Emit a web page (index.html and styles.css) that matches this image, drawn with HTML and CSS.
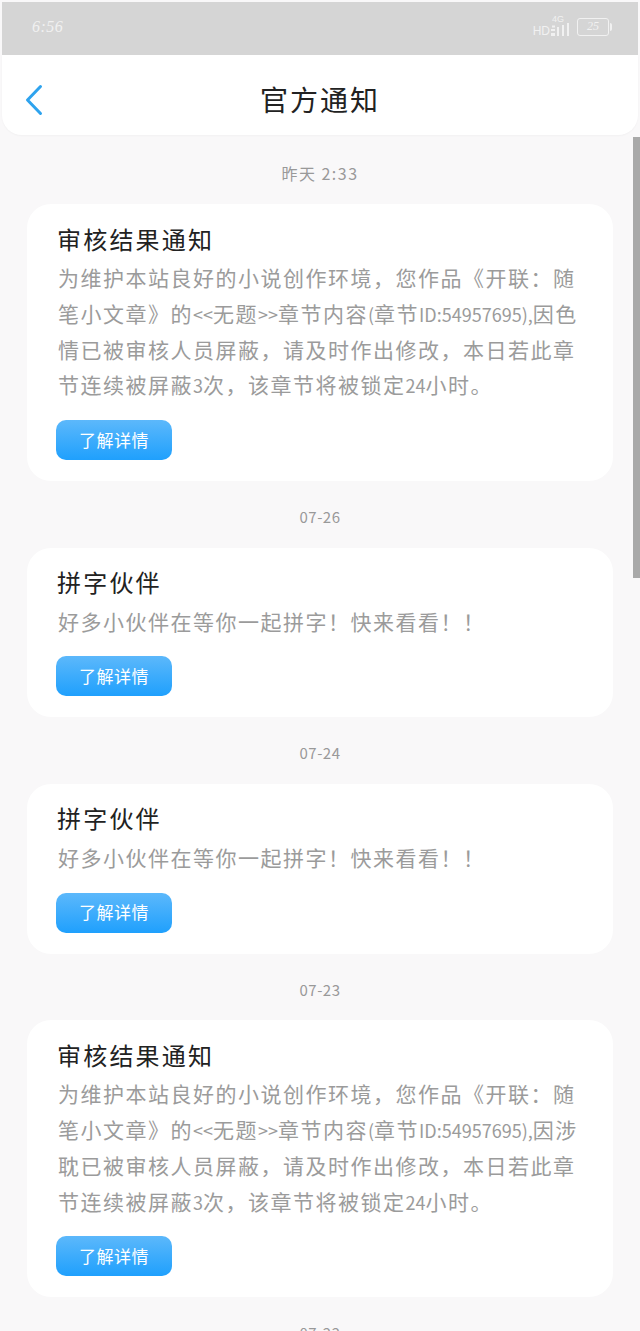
FILE: index.html
```html
<!DOCTYPE html>
<html lang="zh-CN">
<head>
    <meta charset="UTF-8">
    <meta name="viewport" content="width=device-width, initial-scale=1.0">
    <title>官方通知</title>
    <link rel="stylesheet" href="styles.css">
</head>
<body>
    <div class="status-bar">
        <span class="status-time">6:56</span>
        <div class="status-right">
            <span class="status-hd">HD</span>
            <div class="signal">
                <span class="signal-4g">4G</span>
                <svg width="18" height="13" viewBox="0 0 18 13" fill="#f1f1f1">
                    <rect x="0" y="10" width="4" height="3"/>
                    <rect x="0" y="6" width="4" height="2"/>
                    <rect x="1" y="2.500" width="3" height="2"/>
                    <rect x="6" y="4" width="2" height="9"/>
                    <rect x="11" y="2" width="2" height="11"/>
                    <rect x="16" y="0" width="2" height="13"/>
                </svg>
            </div>
            <div class="battery">
                <span class="battery-body">25</span>
                <span class="battery-cap"></span>
            </div>
        </div>
    </div>

    <header class="top-bar">
        <svg class="back-icon" width="20" height="32" viewBox="0 0 20 32" fill="none">
            <path d="M16.5 2.5 L3.5 16 L16.5 29.500" stroke="#2ea3ee" stroke-width="3" stroke-linecap="round" stroke-linejoin="round"/>
        </svg>
        <h1>官方通知</h1>
    </header>

    <main class="list">
        <p class="date date-first">昨天 2:33</p>
        <section class="card">
            <h2>审核结果通知</h2>
            <p>为维护本站良好的小说创作环境，您作品《开联：随<br>笔小文章》的<span class="latin">&lt;&lt;</span>无题<span class="latin">&gt;&gt;</span>章节内容<span class="latin">(</span>章节<span class="latin">ID:54957695),</span>因色<br>情已被审核人员屏蔽，请及时作出修改，本日若此章<br>节连续被屏蔽<span class="latin">3</span>次，该章节将被锁定<span class="latin">24</span>小时。</p>
            <button type="button">了解详情</button>
        </section>

        <p class="date">07-26</p>
        <section class="card">
            <h2>拼字伙伴</h2>
            <p>好多小伙伴在等你一起拼字！快来看看！！</p>
            <button type="button">了解详情</button>
        </section>

        <p class="date">07-24</p>
        <section class="card">
            <h2>拼字伙伴</h2>
            <p>好多小伙伴在等你一起拼字！快来看看！！</p>
            <button type="button">了解详情</button>
        </section>

        <p class="date">07-23</p>
        <section class="card">
            <h2>审核结果通知</h2>
            <p>为维护本站良好的小说创作环境，您作品《开联：随<br>笔小文章》的<span class="latin">&lt;&lt;</span>无题<span class="latin">&gt;&gt;</span>章节内容<span class="latin">(</span>章节<span class="latin">ID:54957695),</span>因涉<br>耽已被审核人员屏蔽，请及时作出修改，本日若此章<br>节连续被屏蔽<span class="latin">3</span>次，该章节将被锁定<span class="latin">24</span>小时。</p>
            <button type="button">了解详情</button>
        </section>

        <p class="date">07-22</p>
    </main>

    <div class="scroll-thumb"></div>
</body>
</html>
```

FILE: styles.css
```css
html, body {
    height: 1331px;
    overflow: hidden;
}
body {
    position: relative;
    margin: 0;
    padding-top: 2px;
    box-sizing: border-box;
    background-color: #f9f8f9;
    font-family: "Noto Sans CJK SC", "Noto Sans", sans-serif;
}

/* status bar */
.status-bar {
    display: flex;
    align-items: center;
    justify-content: space-between;
    height: 53px;
    margin: 0 2px;
    padding: 0 26px 0 30px;
    box-sizing: border-box;
    background-color: #d5d5d5;
    color: #f1f1f1;
}
.status-time {
    font-family: "Liberation Serif", serif;
    font-style: italic;
    font-size: 16px;
    letter-spacing: 0.5px;
    margin-bottom: 3px;
}
.status-right {
    display: flex;
    align-items: flex-end;
    align-self: flex-end;
    margin-bottom: 19px;
}
.status-hd {
    font-family: "Liberation Sans", sans-serif;
    font-size: 12px;
    line-height: 10px;
    margin-right: 1px;
}
.signal {
    display: flex;
    flex-direction: column;
    align-items: center;
    width: 18px;
    margin-right: 8px;
}
.signal-4g {
    font-family: "Liberation Sans", sans-serif;
    font-size: 9px;
    line-height: 7px;
    margin-right: 4px;
}
.signal svg {
    display: block;
}
.battery {
    display: flex;
    align-items: center;
}
.battery-body {
    width: 32px;
    height: 18px;
    box-sizing: border-box;
    border: 1px solid #f1f1f1;
    border-radius: 3px;
    font-family: "Liberation Serif", serif;
    font-style: italic;
    font-size: 12px;
    line-height: 15px;
    text-align: center;
}
.battery-cap {
    width: 2px;
    height: 8px;
    margin-left: 1px;
    background-color: #f1f1f1;
    border-radius: 0 2px 2px 0;
}

/* header */
.top-bar {
    position: relative;
    display: flex;
    align-items: center;
    justify-content: center;
    height: 80px;
    margin: 0 2px;
    background: white;
    border-radius: 0 0 20px 20px;
    box-shadow: 0 1px 2px rgba(0, 0, 0, 0.03);
}
.top-bar h1 {
    margin: 0;
    padding-top: 8px;
    font-size: 28px;
    font-weight: 400;
    letter-spacing: 2px;
    color: #222;
}
.back-icon {
    position: absolute;
    left: 22px;
    top: 29px;
}

/* notice list */
.list {
    padding: 3px 27px 0;
}
.date {
    height: 66.5px;
    margin: 0;
    padding-top: 25px;
    box-sizing: border-box;
    font-size: 15px;
    line-height: 22px;
    letter-spacing: 0.5px;
    text-align: center;
    color: #999;
}
.date-first {
    height: 66px;
    padding-top: 24px;
    font-size: 16px;
    letter-spacing: 1.5px;
}
.card {
    padding: 18.5px 29px 21px;
    background: white;
    border-radius: 24px;
}
.card h2 {
    margin: 0 0 0 1px;
    font-size: 24px;
    font-weight: 400;
    line-height: 32px;
    letter-spacing: 2.2px;
    color: #222;
}
.card p {
    margin: 5.5px -12px 0 2px;
    font-size: 21px;
    line-height: 35.8px;
    letter-spacing: 1.5px;
    color: #9b9b9b;
    white-space: nowrap;
}
.card .latin {
    font-size: 18px;
    line-height: 0;
    letter-spacing: 0;
}
.card button {
    display: block;
    width: 116px;
    height: 40px;
    margin: 17px 0 0 0;
    padding: 0 0 2px;
    border: none;
    border-radius: 10px;
    background: linear-gradient(#5cb8fb, #1fa0fd);
    color: white;
    font-family: inherit;
    font-size: 17px;
    letter-spacing: 0.5px;
}

.scroll-thumb {
    position: absolute;
    right: 0;
    top: 137px;
    width: 7px;
    height: 441px;
    background-color: #a9a9a9;
}
```
